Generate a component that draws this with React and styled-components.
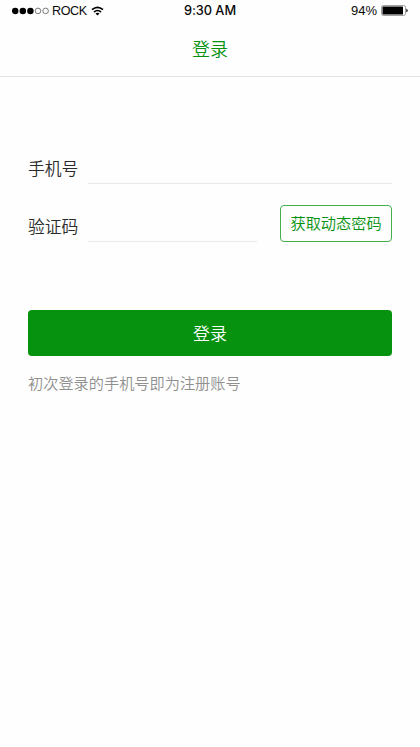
import React from 'react';
import styled, { createGlobalStyle } from 'styled-components';

const GlobalStyle = createGlobalStyle`
  * { box-sizing: border-box; }
  body {
    margin: 0;
    background: #fefefe;
    font-family: "Noto Sans CJK SC", sans-serif;
    font-weight: 350;
  }
  button, input { font-family: inherit; font-weight: inherit; margin: 0; padding: 0; }
`;

const Screen = styled.div`
  height: 747px;
  background: #fefefe;
  overflow: hidden;
`;

const StatusBar = styled.div`
  height: 22px;
  padding: 0 12px;
  display: grid;
  grid-template-columns: 1fr auto 1fr;
  align-items: center;
  font: 12.6px/22px "Liberation Sans", Arial, sans-serif;
  color: #0a0a0a;
`;

const StatusGroup = styled.div`
  display: flex;
  align-items: center;
  height: 21px;
  margin-top: -1px;
  justify-content: ${({ $end }) => ($end ? 'flex-end' : 'flex-start')};
`;

const SignalIcon = styled.svg`
  display: block;
  flex: none;
`;

const Carrier = styled.span`
  margin: 0 4px 0 3px;
  letter-spacing: -0.4px;
`;

const Time = styled.span`
  font: 500 12.8px/22px Inter, sans-serif;
  letter-spacing: -0.05px;
`;

const Percent = styled.span`
  margin-right: 4px;
  font-size: 13px;
`;

const TitleBar = styled.header`
  height: 55px;
  border-bottom: 1px solid #e2e2e2;
  display: flex;
  justify-content: center;
  font-size: 18px;
  line-height: 53px;
  color: #06910f;
`;

const Form = styled.form`
  padding: 76px 28px 0;
`;

const Field = styled.label`
  display: flex;
  align-items: flex-end;
  min-width: 0;
  height: 31px;
`;

const FieldLabel = styled.span`
  width: 60px;
  flex: none;
  font-size: 16.8px;
  line-height: 31px;
  color: #2b2b2b;
  white-space: nowrap;
`;

const FieldInput = styled.input`
  flex: 1;
  min-width: 0;
  height: 30px;
  border: 0;
  border-bottom: 1px solid #e9e9e9;
  border-radius: 0;
  outline: 0;
  background: transparent;
  font-size: 16px;
`;

const CodeRow = styled.div`
  display: flex;
  align-items: flex-end;
  gap: 23px;
  margin-top: 21px;
`;

const CodeField = styled(Field)`
  flex: 1;
`;

const CodeButton = styled.button`
  flex: none;
  width: 112px;
  height: 37px;
  padding-bottom: 2px;
  border: 1px solid #45ad4c;
  border-radius: 4px;
  background: transparent;
  color: #06910f;
  font-size: 15.2px;
  line-height: 33px;
  white-space: nowrap;
`;

const SubmitButton = styled.button`
  display: block;
  width: 364px;
  height: 46px;
  margin-top: 68px;
  border: 0;
  border-radius: 4px;
  background: #06910f;
  color: #fff;
  font-size: 17px;
  line-height: 46px;
`;

const Hint = styled.p`
  margin: 15px 0 0;
  font-size: 15.2px;
  line-height: 22px;
  color: #909090;
`;

function Signal() {
  return (
    <SignalIcon width="37" height="8" viewBox="0 0 37 8">
      {[3.2, 10.8, 18.4].map((x) => <circle key={x} cx={x} cy="3.9" r="3.25" fill="#000" />)}
      {[26, 33.6].map((x) => (
        <circle key={x} cx={x} cy="3.9" r="2.8" fill="none" stroke="#444" strokeWidth="0.7" />
      ))}
    </SignalIcon>
  );
}

function Wifi() {
  return (
    <SignalIcon width="13" height="10" viewBox="0 0 13 10">
      <path d="M1 3.7Q6.5-.9 12 3.7M3 6Q6.5 3 10 6" fill="none" stroke="#000" strokeWidth="1.65" />
      <path d="M4.5 7.6Q6.5 6 8.5 7.6L6.5 9.6Z" />
    </SignalIcon>
  );
}

function Battery() {
  return (
    <SignalIcon width="27" height="11" viewBox="0 0 27 11">
      <rect x=".5" y=".5" width="24" height="10" rx="1.8" fill="#fff" stroke="#888" strokeWidth="0.8" />
      <rect x="1.5" y="1.5" width="20.5" height="8" rx=".5" />
      <path d="M25.4 3.5Q28 5.5 25.4 7.5Z" />
    </SignalIcon>
  );
}

export default function App() {
  return (
    <Screen>
      <GlobalStyle />
      <StatusBar>
        <StatusGroup>
          <Signal />
          <Carrier>ROCK</Carrier>
          <Wifi />
        </StatusGroup>
        <Time>9:30 AM</Time>
        <StatusGroup $end>
          <Percent>94%</Percent>
          <Battery />
        </StatusGroup>
      </StatusBar>
      <TitleBar>登录</TitleBar>
      <Form onSubmit={(event) => event.preventDefault()}>
        <Field>
          <FieldLabel>手机号</FieldLabel>
          <FieldInput type="tel" />
        </Field>
        <CodeRow>
          <CodeField>
            <FieldLabel>验证码</FieldLabel>
            <FieldInput type="text" inputMode="numeric" />
          </CodeField>
          <CodeButton type="button">获取动态密码</CodeButton>
        </CodeRow>
        <SubmitButton type="submit">登录</SubmitButton>
        <Hint>初次登录的手机号即为注册账号</Hint>
      </Form>
    </Screen>
  );
}
